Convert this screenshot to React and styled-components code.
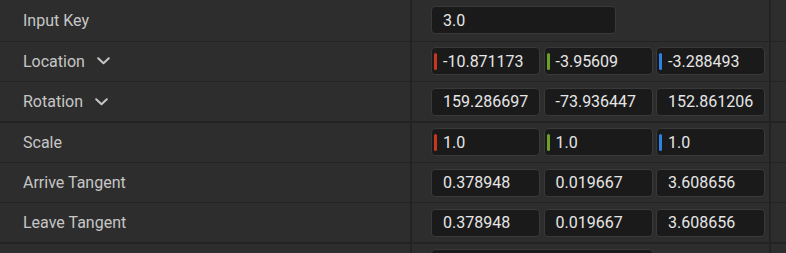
import React from "react";
import styled, { createGlobalStyle } from "styled-components";

const Global = createGlobalStyle`
  html, body { margin: 0; padding: 0; background: #232323; }
  body { font-family: Roboto, "Noto Sans", sans-serif; }
`;

const Panel = styled.div`
  width: 786px;
  height: 253px;
  overflow: hidden;
  background: #232323;
  display: flex;
  flex-direction: column;
  gap: 1.4px;
`;

const Row = styled.div`
  display: grid;
  grid-template-columns: 410px 357px 1fr;
  column-gap: 2px;
  height: 39px;
  flex: none;
  &:first-child { height: 40.5px; }
`;

const Cell = styled.div`
  background: #2d2d2d;
  display: flex;
  align-items: center;
`;

const LabelCell = styled(Cell)`
  padding-left: 23px;
  gap: 12px;
  color: #c6c6c6;
  font-size: 16px;
`;

const ValueCell = styled(Cell)`
  padding-left: 19px;
`;

const Fields = styled.div`
  display: grid;
  grid-template-columns: ${(p) => p.$cols};
  column-gap: 3.5px;
`;

const Field = styled.div`
  position: relative;
  box-sizing: border-box;
  height: 28px;
  background: #1a1a1a;
  border: 1px solid #393939;
  border-radius: 4px;
  padding-left: 11px;
  display: flex;
  align-items: center;
  color: #e6e6e6;
  font-size: 16px;
  white-space: nowrap;
  overflow: hidden;
`;

const AxisBar = styled.span`
  position: absolute;
  left: 2px;
  top: 4.5px;
  width: 3px;
  height: 17px;
  border-radius: 2px;
  background: ${(p) => p.$color};
`;

const Chevron = () => (
  <svg width="13" height="8" viewBox="0 0 13 8" style={{ display: "block" }}>
    <path d="M1.2 1.2 L6.5 6.3 L11.8 1.2" fill="none" stroke="#c6c6c6" strokeWidth="2" strokeLinecap="round" strokeLinejoin="round" />
  </svg>
);

const AXIS = ["#c9361f", "#6ba02a", "#2e82e6"];

const rows = [
  { label: "Input Key", cols: "185px", values: ["3.0"] },
  { label: "Location", chevron: true, axis: true, values: ["-10.871173", "-3.95609", "-3.288493"] },
  { label: "Rotation", chevron: true, values: ["159.286697", "-73.936447", "152.861206"] },
  { label: "Scale", axis: true, values: ["1.0", "1.0", "1.0"] },
  { label: "Arrive Tangent", values: ["0.378948", "0.019667", "3.608656"] },
  { label: "Leave Tangent", values: ["0.378948", "0.019667", "3.608656"] },
  { label: "", cols: "222px", values: [""] },
];

export default function App() {
  return (
    <>
      <Global />
      <Panel>
        {rows.map((r, i) => (
          <Row key={i}>
            <LabelCell>
              {r.label}
              {r.chevron && <Chevron />}
            </LabelCell>
            <ValueCell>
              <Fields $cols={r.cols || "109px 109px 109px"}>
                {r.values.map((v, j) => (
                  <Field key={j}>
                    {r.axis && <AxisBar $color={AXIS[j]} />}
                    {v}
                  </Field>
                ))}
              </Fields>
            </ValueCell>
            <Cell />
          </Row>
        ))}
      </Panel>
    </>
  );
}
